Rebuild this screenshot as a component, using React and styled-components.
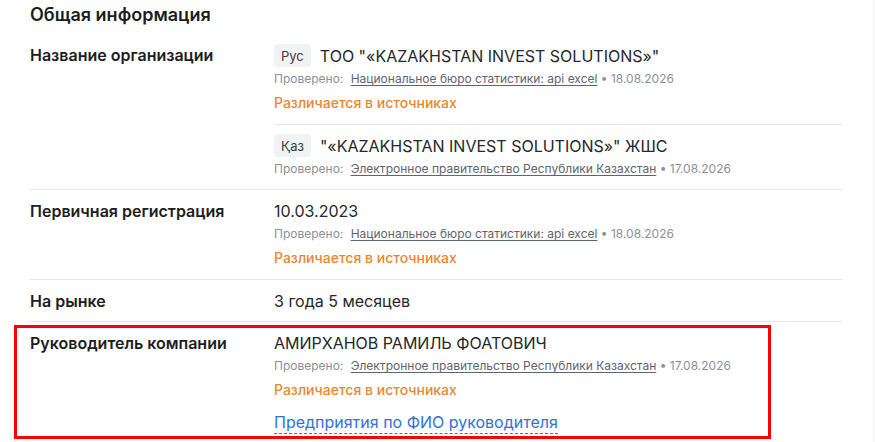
import React from 'react'
import styled, { createGlobalStyle } from 'styled-components'

const GlobalStyle = createGlobalStyle`
  body {
    margin: 0;
    background: #ffffff;
    font-family: Inter, "Noto Sans", Arial, sans-serif;
    color: #1f2023;
  }
`

const Page = styled.div`
  width: 874px;
  height: 442px;
  overflow: hidden;
  border-right: 1px solid #f0f0f2;
  box-sizing: border-box;
`

const Section = styled.section`
  padding: 0 32px 0 30px;
  width: 812px;
`

const Title = styled.h2`
  margin: 0;
  padding-top: 3px;
  font-size: 18px;
  line-height: 24px;
  font-weight: 600;
  color: #1c1d20;
  margin-bottom: 7px;
`

const Row = styled.div`
  position: relative;
  display: grid;
  grid-template-columns: 244px 1fr;
  border-bottom: ${({ $last }) => ($last ? 'none' : '1px solid #e6e7ea')};
`

const Label = styled.div`
  padding-top: 10px;
  font-size: 16px;
  line-height: 22px;
  font-weight: 600;
  color: #1c1d20;
`

const Values = styled.div`
  display: flex;
  flex-direction: column;
`

const Item = styled.div`
  padding: ${({ $first }) => ($first === false ? '9px' : '10px')} 0
    ${({ $tight }) => ($tight ? '9px' : '12px')};
  border-bottom: ${({ $divided }) => ($divided ? '1px solid #e6e7ea' : 'none')};
`

const Main = styled.div`
  display: flex;
  align-items: center;
  min-height: 22px;
  font-size: 16px;
  line-height: 22px;
  color: #25272b;
`

const Lang = styled.span`
  display: inline-flex;
  align-items: center;
  justify-content: center;
  height: 23px;
  padding: 0 7px;
  margin-right: 9px;
  border-radius: 4px;
  background: #f1f2f4;
  font-size: 13px;
  color: #3a3c40;
`

const Checked = styled.div`
  margin-top: 4px;
  font-size: 12px;
  line-height: 16px;
  color: #8b9099;
`

const Source = styled.a`
  margin-left: 4px;
  color: #5e6470;
  text-decoration: underline;
  text-underline-offset: 2px;
`

const Diff = styled.div`
  margin-top: 7px;
  font-size: 14px;
  line-height: 18px;
  font-weight: 500;
  color: #e8872f;
`

const PersonLink = styled.a`
  display: inline-block;
  margin-top: 13px;
  font-size: 16px;
  line-height: 21px;
  color: #2f73d6;
  text-decoration: none;
  border-bottom: 1px dashed #2f73d6;
`

const Highlight = styled.div`
  position: absolute;
  left: -16px;
  top: 3px;
  width: 757px;
  height: 114px;
  border: 3px solid #ff0000;
  box-sizing: border-box;
  pointer-events: none;
`

const Verified = ({ source, date }) => (
  <Checked>
    Проверено: <Source href="#">{source}</Source> • {date}
  </Checked>
)

const NBS = 'Национальное бюро статистики: api excel'
const EGOV = 'Электронное правительство Республики Казахстан'

export default function App() {
  return (
    <Page>
      <GlobalStyle />
      <Section>
        <Title>Общая информация</Title>

        <Row>
          <Label>Название организации</Label>
          <Values>
            <Item $divided>
              <Main>
                <Lang>Рус</Lang>ТОО "«KAZAKHSTAN INVEST SOLUTIONS»"
              </Main>
              <Verified source={NBS} date="18.08.2026" />
              <Diff>Различается в источниках</Diff>
            </Item>
            <Item $first={false}>
              <Main>
                <Lang>Қаз</Lang>"«KAZAKHSTAN INVEST SOLUTIONS»" ЖШС
              </Main>
              <Verified source={EGOV} date="17.08.2026" />
            </Item>
          </Values>
        </Row>

        <Row>
          <Label>Первичная регистрация</Label>
          <Item>
            <Main>10.03.2023</Main>
            <Verified source={NBS} date="18.08.2026" />
            <Diff>Различается в источниках</Diff>
          </Item>
        </Row>

        <Row>
          <Label>На рынке</Label>
          <Item $tight>
            <Main>3 года 5 месяцев</Main>
          </Item>
        </Row>

        <Row $last>
          <Label>Руководитель компании</Label>
          <Item>
            <Main>АМИРХАНОВ РАМИЛЬ ФОАТОВИЧ</Main>
            <Verified source={EGOV} date="17.08.2026" />
            <Diff>Различается в источниках</Diff>
            <PersonLink href="#">Предприятия по ФИО руководителя</PersonLink>
          </Item>
          <Highlight />
        </Row>
      </Section>
    </Page>
  )
}
